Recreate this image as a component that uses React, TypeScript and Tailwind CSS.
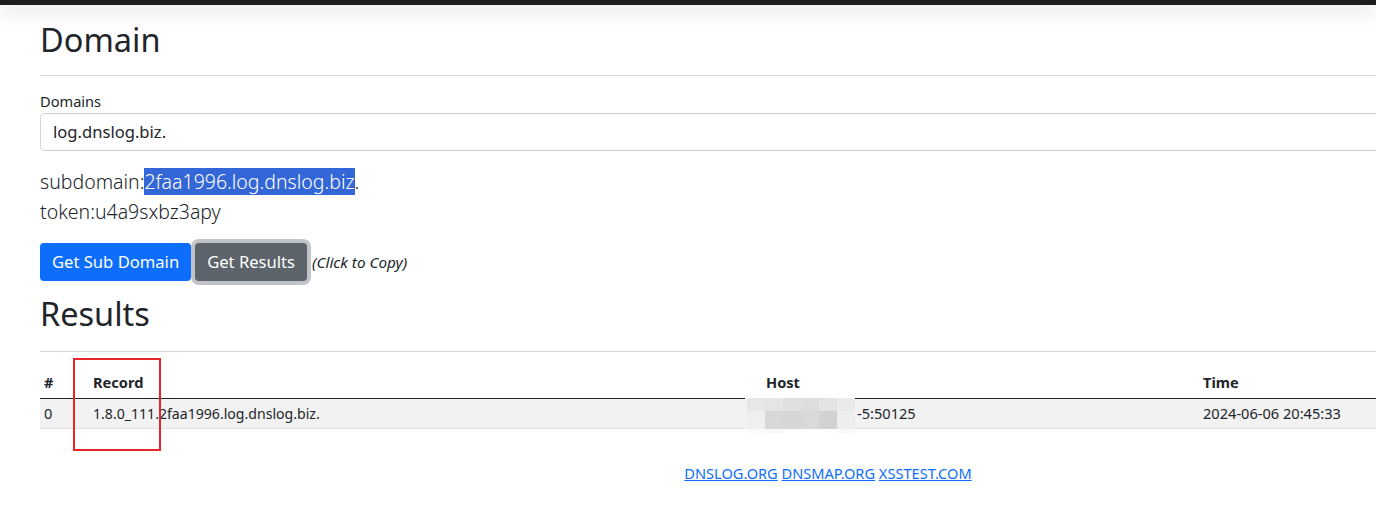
export default function App() {
  const pixels = [
    ["bg-[#f0f1f0]", "bg-[#e6e8e7]", "bg-[#e4e6e5]", "bg-[#dfe1e0]", "bg-[#dcdedd]", "bg-[#e2e4e3]", "bg-[#e9ebea]"],
    ["bg-[#f1f1f1]", "bg-[#efefef]", "bg-[#d9d8d6]", "bg-[#d6d6d4]", "bg-[#d9d9d7]", "bg-[#d2d2d0]", "bg-[#eeeeee]"],
    ["bg-white", "bg-[#fafafa]", "bg-[#f7f7f7]", "bg-white", "bg-white", "bg-white", "bg-[#f8f8f8]"],
  ];

  return (
    <div
      className="relative min-h-[508px] w-full overflow-hidden bg-white text-[#212529]"
      style={{ fontFamily: '"Segoe UI", "Noto Sans", "Open Sans", sans-serif' }}
    >
      <div className="relative z-10 h-[5px] bg-[#1b1e21] shadow-[0_5px_18px_rgba(0,0,0,0.22)]" />

      <div className="w-[1656px] px-10">
        <h1 className="mt-[11px] text-[32.5px] leading-[48px] font-normal">Domain</h1>
        <hr className="mt-[11px] border-t border-[#d5d5d5]" />

        <div className="mt-[15px]">
          <label className="block text-[14.6px] leading-[20px]">Domains</label>
          <div className="mt-[2px] h-[38px] rounded-[4px] border border-[#ced4da] px-3 text-[16.6px] leading-[36px]">
            log.dnslog.biz.
          </div>
        </div>

        <div className="mt-[16px] text-[19.5px] leading-[30px] font-light">
          <p>
            subdomain:<span className="bg-[#3366d6] text-white">2faa1996.log.dnslog.biz</span>.
          </p>
          <p>token:u4a9sxbz3apy</p>
        </div>

        <div className="mt-[16px] flex items-center">
          <button className="h-[38px] rounded-[4px] bg-[#0d6efd] px-3 text-[16.6px] text-white">
            Get Sub Domain
          </button>
          <button className="ml-1 h-[38px] rounded-[4px] bg-[#5c636a] px-3 text-[16.6px] text-white shadow-[0_0_0_4px_rgba(130,138,145,0.5)]">
            Get Results
          </button>
          <em className="ml-[5px] text-[15.3px]">(Click to Copy)</em>
        </div>

        <h1 className="mt-[9px] text-[32.5px] leading-[48px] font-normal">Results</h1>
        <hr className="mt-[13px] border-t border-[#d5d5d5]" />

        <table className="mt-[14px] w-full border-collapse text-left text-[14.6px]">
          <thead>
            <tr className="border-b border-[#212529]">
              <th className="w-[49px] px-1 py-[4px] leading-[24px] font-bold">#</th>
              <th className="w-[673px] px-1 py-[4px] leading-[24px] font-bold">Record</th>
              <th className="w-[437px] px-1 py-[4px] leading-[24px] font-bold">Host</th>
              <th className="px-1 py-[4px] leading-[24px] font-bold">Time</th>
            </tr>
          </thead>
          <tbody>
            <tr className="border-b border-[#dee2e6] bg-[#f2f2f2]">
              <td className="px-1 py-[2px] leading-[25px]">0</td>
              <td className="px-1 py-[2px] text-[14.1px] leading-[25px]">1.8.0_111.2faa1996.log.dnslog.biz.</td>
              <td className="relative px-1 py-[2px] leading-[25px]">
                <div className="absolute top-[-1px] left-[-17px] flex flex-col">
                  {pixels.map((row, i) => (
                    <div key={i} className={`flex ${i === 0 ? "h-[13px]" : i === 1 ? "h-[18px]" : "h-[4px]"}`}>
                      {row.map((c, j) => (
                        <div key={j} className={`${c} ${j === 0 ? "w-[2px]" : "w-[18px]"}`} />
                      ))}
                    </div>
                  ))}
                </div>
                <span className="ml-[91px]">-5:50125</span>
              </td>
              <td className="px-1 py-[2px] leading-[25px]">2024-06-06 20:45:33</td>
            </tr>
          </tbody>
        </table>

        <div className="mt-[34px] text-center text-[14.6px] leading-[20px]">
          <a href="#" className="text-[#0d6efd] underline">DNSLOG.ORG</a>{" "}
          <a href="#" className="text-[#0d6efd] underline">DNSMAP.ORG</a>{" "}
          <a href="#" className="text-[#0d6efd] underline">XSSTEST.COM</a>
        </div>
      </div>

      <div className="absolute top-[358px] left-[73px] h-[93px] w-[88px] border-2 border-[#e8262a]" />
    </div>
  );
}
